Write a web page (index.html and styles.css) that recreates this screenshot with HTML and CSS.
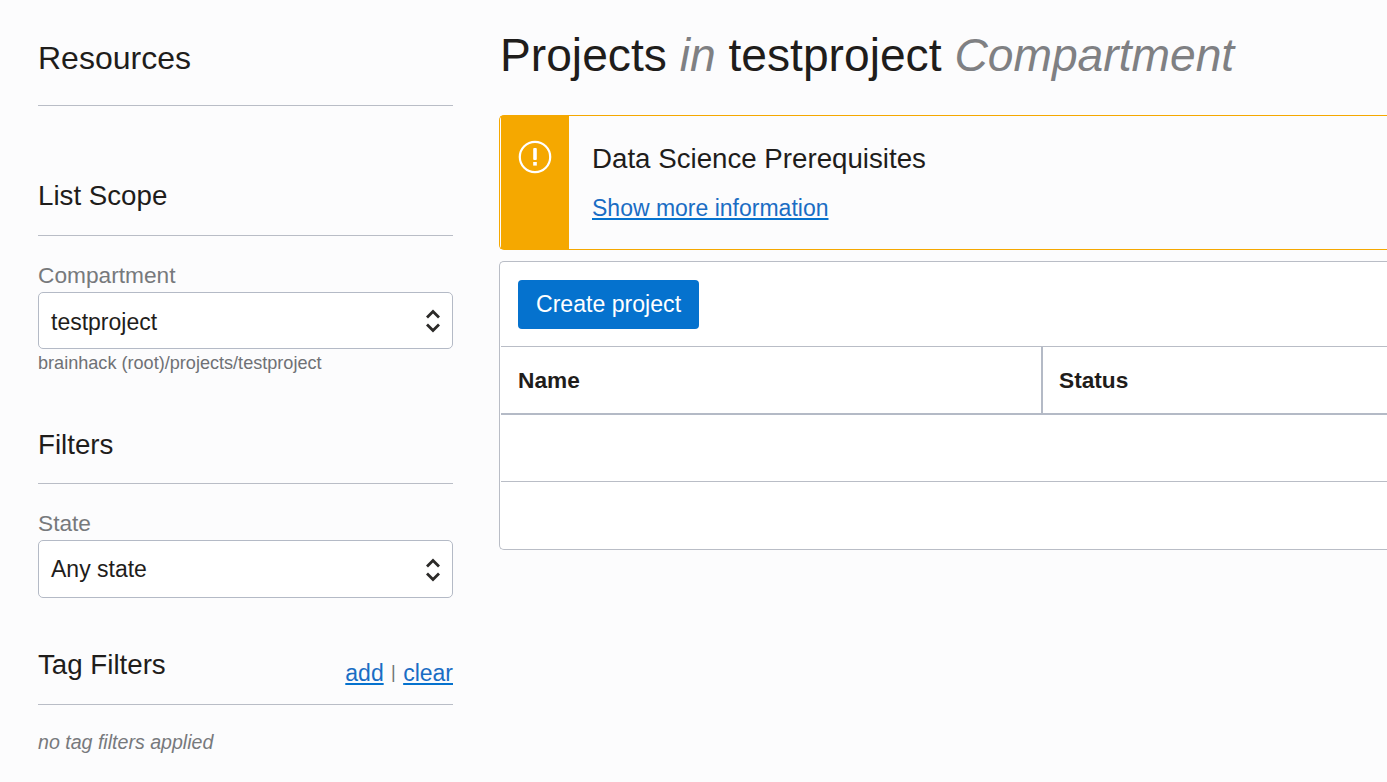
FILE: index.html
```html
<!DOCTYPE html>
<html lang="en">
<head>
    <meta charset="UTF-8">
    <title>Projects in testproject Compartment</title>
    <link rel="stylesheet" href="styles.css">
</head>
<body>
    <div class="page">
        <aside class="sidebar">
            <h2 class="side-title first">Resources</h2>

            <h2 class="side-title scope">List Scope</h2>
            <label class="field-label">Compartment</label>
            <div class="select">
                <span>testproject</span>
                <svg class="chevrons" width="16" height="28" viewBox="0 0 16 28"><path d="M2 10.500L8 4.500L14 10.500M2 17.500L8 23.500L14 17.500" fill="none" stroke="#2b2a28" stroke-width="2.800"/></svg>
            </div>
            <div class="hint">brainhack (root)/projects/testproject</div>

            <h2 class="side-title filters">Filters</h2>
            <label class="field-label">State</label>
            <div class="select tall">
                <span>Any state</span>
                <svg class="chevrons" width="16" height="28" viewBox="0 0 16 28"><path d="M2 10.500L8 4.500L14 10.500M2 17.500L8 23.500L14 17.500" fill="none" stroke="#2b2a28" stroke-width="2.800"/></svg>
            </div>

            <div class="side-title tags">
                <h2>Tag Filters</h2>
                <div class="tag-links"><a href="#">add</a> <span class="pipe">|</span> <a href="#">clear</a></div>
            </div>
            <div class="no-tags">no tag filters applied</div>
        </aside>

        <main class="content">
            <h1 class="page-title">Projects <em>in</em> testproject <em>Compartment</em></h1>

            <div class="notice">
                <div class="notice-icon">
                    <svg width="34" height="34" viewBox="0 0 34 34"><circle cx="17" cy="17" r="15.200" fill="none" stroke="#fff" stroke-width="2.200"/><rect x="15.200" y="8" width="3.600" height="12" rx="1" fill="#fff"/><rect x="15.200" y="22" width="3.600" height="3.600" fill="#fff"/></svg>
                </div>
                <div class="notice-body">
                    <div class="notice-title">Data Science Prerequisites</div>
                    <a href="#">Show more information</a>
                </div>
            </div>

            <div class="panel">
                <div class="toolbar"><button class="primary" type="button">Create project</button></div>
                <div class="row head">
                    <div class="cell name">Name</div>
                    <div class="cell">Status</div>
                </div>
                <div class="row empty"></div>
                <div class="row empty last"></div>
            </div>
        </main>
    </div>
</body>
</html>
```

FILE: styles.css
```css
html, body {
    margin: 0;
    height: 100%;
    overflow: hidden;
}

body {
    font-family: "Liberation Sans", Arial, sans-serif;
    background-color: #fcfcfd;
    color: #1f1d1b;
}

a {
    color: #1a6dc4;
    text-decoration-color: #0572ce;
}

.page {
    display: flex;
}

.sidebar {
    width: 415px;
    margin-left: 38px;
    flex: none;
}

.side-title {
    margin: 0;
    font-weight: normal;
    font-size: 27.700px;
    line-height: 32px;
    padding-bottom: 23px;
    border-bottom: 1px solid #b9bdc6;
}

.side-title.first {
    font-size: 32px;
    margin-top: 42px;
    padding-bottom: 31px;
}

.side-title.scope {
    margin-top: 74px;
}

.side-title.filters {
    margin-top: 55px;
    padding-bottom: 22px;
}

.field-label {
    display: block;
    margin-top: 26px;
    font-size: 22.700px;
    line-height: 26px;
    color: #77797c;
}

.select {
    box-sizing: border-box;
    height: 57px;
    margin-top: 4px;
    padding: 3px 11px 0 12px;
    display: flex;
    align-items: center;
    justify-content: space-between;
    background: #fff;
    border: 1px solid #b4bac6;
    border-radius: 5px;
    font-size: 23px;
}

.select.tall {
    height: 58px;
    padding-top: 1px;
}

.chevrons {
    margin-top: -3px;
}

.select.tall .chevrons {
    margin-top: 1px;
}

.hint {
    margin-top: 3px;
    font-size: 18.100px;
    line-height: 22px;
    color: #6f7175;
}

.side-title.tags {
    display: flex;
    justify-content: space-between;
    align-items: flex-end;
    margin-top: 51px;
    padding-bottom: 18px;
}

.tags h2 {
    margin: 0 0 5px;
    font-size: 27.700px;
    line-height: 32px;
    font-weight: normal;
}

.tag-links {
    font-size: 23px;
    line-height: 26px;
}

.pipe {
    font-size: 18px;
    vertical-align: 3px;
    margin: 0 1px;
    color: #6f7175;
}

.no-tags {
    margin-top: 25px;
    font-size: 19.600px;
    line-height: 24px;
    font-style: italic;
    color: #77797c;
}

.content {
    flex: 1;
    margin-left: 46px;
}

.page-title {
    margin: 28px 0 32px 1px;
    font-size: 46.200px;
    line-height: 55px;
    font-weight: normal;
}

.page-title em {
    color: #7f8083;
}

.notice {
    display: flex;
    height: 135px;
    box-sizing: border-box;
    border: 1px solid #f5a800;
    border-right: 0;
    border-radius: 5px 0 0 5px;
    padding: 0 0 0 1px;
}

.notice-icon {
    width: 68px;
    flex: none;
    background: #f5a800;
    display: flex;
    justify-content: center;
    align-items: flex-start;
    padding-top: 24px;
    padding-right: 1px;
    box-sizing: border-box;
}

.notice-body {
    padding: 26px 0 0 23px;
    font-size: 23px;
}

.notice-title {
    font-size: 27.700px;
    line-height: 34px;
    margin-bottom: 19px;
}

.panel {
    margin-top: 11px;
    padding-left: 1px;
    background: #fff;
    border: 1px solid #b9bdc6;
    border-right: 0;
    border-radius: 5px 0 0 5px;
    height: 289px;
    box-sizing: border-box;
}

.toolbar {
    height: 85px;
    padding: 18px 17px;
    box-sizing: border-box;
    border-bottom: 1px solid #b9bdc6;
}

.primary {
    height: 49px;
    padding: 0 18px;
    border: 0;
    border-radius: 4px;
    background: #0572ce;
    color: #fff;
    font-family: inherit;
    font-size: 23.100px;
}

.row {
    display: flex;
}

.row.head {
    height: 68px;
    border-bottom: 2px solid #b4bac6;
    box-sizing: border-box;
}

.cell {
    padding: 0 16px;
    font-size: 22.700px;
    font-weight: bold;
    line-height: 66px;
}

.cell.name {
    width: 542px;
    padding-left: 17px;
    box-sizing: border-box;
    border-right: 2px solid #b4bac6;
}

.row.empty {
    height: 67px;
    box-sizing: border-box;
    border-bottom: 1px solid #b9bdc6;
}

.row.empty.last {
    border-bottom: 0;
}
```
